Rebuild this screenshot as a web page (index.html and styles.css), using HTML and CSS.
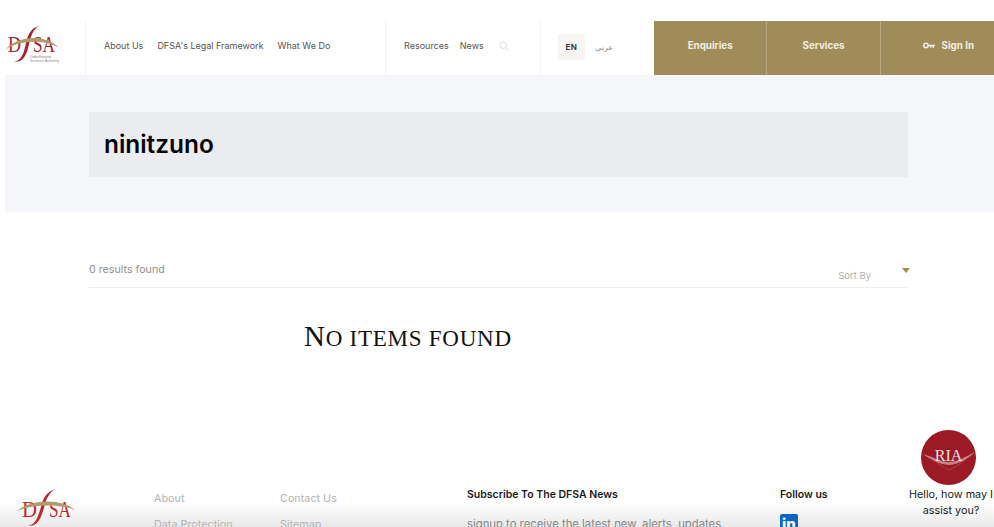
FILE: index.html
```html
<!DOCTYPE html>
<html>
  <head>
    <title>
      DFSA Search
    </title>
    <link rel="stylesheet" href="styles.css">
  </head>
  <body>
  <!-- navbar -->
    <nav class="nav_bar">
      <div class="logo_cell">
        <svg class="logo" width="58" height="40" viewBox="0 0 58 40">
          <text x="4" y="27" class="logo_caps" font-size="24" textLength="13" lengthAdjust="spacingAndGlyphs">D</text>
          <text x="29" y="27" class="logo_caps" font-size="24" textLength="22" lengthAdjust="spacingAndGlyphs">SA</text>
          <path d="M10 36 C17 37 20 28 22 18 C24 8 28 3 35 1 C29 5 27 10 25 19 C23 29 19 39 10 36Z" fill="#a5232f"/>
          <path d="M1 25 C14 10 42 9 55 23 C41 14 15 15 1 25Z" fill="#b39a6b"/>
          <text x="26" y="32.5" class="logo_small" font-size="3.6" textLength="21">Dubai Financial</text>
          <text x="26" y="36.5" class="logo_small" font-size="3.6" textLength="29">Services Authority</text>
        </svg>
      </div>
      <div class="nav_main">
        <a>About Us</a>
        <a>DFSA's Legal Framework</a>
        <a>What We Do</a>
      </div>
      <div class="nav_second">
        <a>Resources</a>
        <a>News</a>
        <svg class="search_icon" width="10" height="10" viewBox="0 0 11 11">
          <circle cx="4.6" cy="4.6" r="3.6" fill="none" stroke="#d8d8d8" stroke-width="1"/>
          <path d="M7.3 7.3 L10.4 10.4" stroke="#d8d8d8" stroke-width="1"/>
        </svg>
      </div>
      <div class="lang">
        <div class="lang_en">EN</div>
        <div class="lang_ar">عربي</div>
      </div>
      <div class="gold_links">
        <div class="gold_item">Enquiries</div>
        <div class="gold_item">Services</div>
        <div class="gold_item sign_in">
          <svg width="12" height="7" viewBox="0 0 12 7">
            <circle cx="3" cy="3.5" r="2.2" fill="none" stroke="#f3eee0" stroke-width="1.5"/>
            <path d="M5 2.8 H12 V4.2 H10.8 V6 H9.4 V4.2 H8.4 V5.4 H7 V4.2 H5Z" fill="#f3eee0"/>
          </svg>
          Sign In
        </div>
      </div>
    </nav>
<!-- search term -->
    <section class="hero">
      <div class="hero_box">ninitzuno</div>
    </section>
<!-- results -->
    <main class="results">
      <div class="results_bar">
        <div class="results_count">0 results found</div>
        <div class="sort_by">Sort By</div>
        <div class="sort_arrow"></div>
      </div>
      <h2 class="no_items">No items found</h2>
    </main>
<!-- footer -->
    <footer class="footer-section">
      <svg class="footer_logo" width="58" height="38" viewBox="0 0 58 38">
        <text x="5" y="28" class="footer_caps" font-size="24" textLength="15" lengthAdjust="spacingAndGlyphs">D</text>
        <text x="32" y="28" class="footer_caps" font-size="24" textLength="22" lengthAdjust="spacingAndGlyphs">SA</text>
        <path d="M11 36 C18 37 21 28 24 18 C26 8 30 3 38 0 C32 4 29 10 27 19 C24 29 20 39 11 36Z" fill="#c0272d"/>
        <path d="M0 22 C14 10 44 9 58 21 C43 15 16 15 0 22Z" fill="#b39a6b"/>
      </svg>
      <div class="footer_col col_one">
        <a>About</a>
        <a>Data Protection</a>
      </div>
      <div class="footer_col col_two">
        <a>Contact Us</a>
        <a>Sitemap</a>
      </div>
      <div class="subscribe">
        <h4>Subscribe To The DFSA News</h4>
        <p>signup to receive the latest new, alerts, updates</p>
      </div>
      <div class="follow">
        <h4>Follow us</h4>
        <div class="linkedin">in</div>
      </div>
    </footer>
<!-- chat bubble -->
    <div class="ria">
      <div class="ria_circle">
        <svg class="ria_wings" width="55" height="22" viewBox="0 0 55 22">
          <path d="M2 5 C12 8 20 13 28 13 C36 13 44 8 54 3 C46 11 38 15 28 16 C18 15 10 11 2 5Z" fill="#c9808a"/>
          <path d="M14 12 C20 17 24 19 28 21 C32 19 38 16 44 11" fill="none" stroke="#b5434f" stroke-width="1"/>
        </svg>
        <span class="ria_name">RIA</span>
      </div>
      <div class="ria_text">Hello, how may I<br>assist you?</div>
    </div>
    <div class="bottom_fade"></div>
  </body>
</html>
```

FILE: styles.css
```css
html, body{
  margin: 0;
  padding: 0;
  height: 527px;
  overflow: hidden;
  background-color: white;
  font-family: Inter, "Noto Sans", sans-serif;
}
/* navbar */
.nav_bar{
  display: flex;
  flex-direction: row;
  height: 54px;
  margin-top: 21px;
  font-size: 9px;
  color: rgb(85, 85, 85);
}
.logo_cell{
  width: 86px;
  border-right: 1px solid rgb(243, 243, 243);
  padding: 4px 0 0 4px;
  box-sizing: border-box;
}
.logo{
  display: block;
  overflow: visible;
}
.logo_caps{
  font-family: "Liberation Serif", serif;
  fill: #a5232f;
}
.footer_caps{
  font-family: "Liberation Serif", serif;
  fill: #c0272d;
}
.logo_small{
  font-family: "Liberation Sans", sans-serif;
  fill: #8a8a8a;
}
.nav_main{
  display: flex;
  align-items: center;
  gap: 14px;
  width: 300px;
  padding-left: 18px;
  padding-bottom: 5px;
  box-sizing: border-box;
  border-right: 1px solid rgb(243, 243, 243);
}
.nav_second{
  display: flex;
  align-items: center;
  gap: 11px;
  width: 155px;
  padding-left: 18px;
  padding-bottom: 5px;
  box-sizing: border-box;
  border-right: 1px solid rgb(243, 243, 243);
}
.search_icon{
  margin-left: 4px;
}
.lang{
  display: flex;
  align-items: center;
  gap: 10px;
  width: 113px;
  padding-left: 17px;
  padding-bottom: 3px;
  box-sizing: border-box;
}
.lang_en{
  width: 27px;
  height: 26px;
  background-color: rgb(246, 245, 242);
  color: rgb(60, 60, 60);
  font-size: 8px;
  font-weight: 700;
  letter-spacing: 0.6px;
  display: flex;
  align-items: center;
  justify-content: center;
}
.lang_ar{
  font-family: "DejaVu Sans", sans-serif;
  font-size: 8px;
  color: rgb(140, 140, 140);
  margin-top: 2px;
}
.gold_links{
  flex: 1;
  display: grid;
  grid-template-columns: repeat(3, 1fr);
  background-color: rgb(160, 140, 88);
  color: rgb(243, 238, 224);
  font-size: 9.8px;
  font-weight: 700;
}
.gold_item{
  display: flex;
  align-items: center;
  justify-content: center;
  border-right: 1px solid rgb(184, 168, 128);
  padding-bottom: 5px;
}
.sign_in{
  border-right: none;
  justify-content: flex-end;
  padding-right: 20px;
  gap: 6px;
}
/* search term */
.hero{
  margin-left: 5px;
  padding: 37px 86px 35px 84px;
  background-color: rgb(244, 246, 250);
}
.hero_box{
  height: 65px;
  line-height: 64px;
  padding-left: 15px;
  background-color: rgb(235, 236, 240);
  font-size: 24.4px;
  font-weight: 600;
  color: rgb(5, 5, 5);
}
/* results */
.results{
  padding: 0 86px 0 89px;
}
.results_bar{
  display: flex;
  align-items: center;
  height: 76px;
  box-sizing: border-box;
  padding-top: 48px;
  padding-bottom: 9px;
  border-bottom: 1px solid rgb(238, 238, 238);
  position: relative;
  color: rgb(145, 145, 145);
  font-size: 10.7px;
}
.results_count{
  flex: 1;
}
.sort_by{
  font-size: 9.5px;
  color: rgb(175, 175, 175);
  margin-right: 37px;
  padding-top: 13px;
}
.sort_arrow{
  position: absolute;
  right: -2px;
  top: 56px;
  border-left: 4px solid transparent;
  border-right: 4px solid transparent;
  border-top: 5px solid rgb(160, 140, 88);
}
.no_items{
  margin: 32px 0 0 215px;
  font-family: "Liberation Serif", serif;
  font-size: 23px;
  font-weight: normal;
  text-transform: uppercase;
  letter-spacing: 0.75px;
  line-height: 32px;
  color: rgb(17, 17, 17);
}
.no_items::first-letter{
  font-size: 29px;
}
/* footer */
.footer-section{
  position: relative;
  z-index: 1;
  display: flex;
  height: 36px;
  margin-top: 137px;
  padding-left: 17px;
  font-size: 10.8px;
  color: rgb(180, 180, 180);
}
.footer_logo{
  flex: none;
  margin-top: -3px;
  overflow: visible;
}
.footer_col{
  display: flex;
  flex-direction: column;
  gap: 13px;
  line-height: 13px;
}
.col_one{
  margin-left: 79px;
  width: 126px;
}
.col_two{
  width: 187px;
}
.subscribe{
  width: 313px;
  margin-top: -4px;
}
.follow{
  margin-top: -4px;
}
.subscribe h4,
.follow h4{
  margin: 0;
  font-size: 10.5px;
  line-height: 13px;
  font-weight: 600;
  color: rgb(26, 26, 26);
}
.subscribe p{
  margin: 17px 0 0 0;
  font-size: 11.3px;
  line-height: 13px;
  color: rgb(136, 136, 136);
}
.linkedin{
  width: 18px;
  height: 18px;
  margin-top: 13px;
  background-color: rgb(10, 102, 194);
  border-radius: 2px;
  color: white;
  font-size: 15px;
  font-weight: 800;
  line-height: 21px;
  text-align: center;
}
/* chat bubble */
.ria{
  position: absolute;
  z-index: 2;
  left: 902px;
  top: 430px;
  width: 92px;
  text-align: center;
  font-size: 10.8px;
  line-height: 16px;
  color: rgb(26, 26, 26);
}
.ria_circle{
  position: relative;
  width: 55px;
  height: 55px;
  margin-left: 19px;
  border-radius: 50%;
  background-color: rgb(155, 26, 38);
  overflow: hidden;
}
.ria_wings{
  position: absolute;
  left: 0;
  top: 19px;
}
.ria_name{
  position: absolute;
  left: 0;
  right: 0;
  top: 16px;
  font-family: "Liberation Serif", serif;
  font-size: 16px;
  line-height: 20px;
  color: rgb(245, 225, 228);
}
.ria_text{
  width: 90px;
  margin: 2px 0 0 4px;
}
.bottom_fade{
  position: absolute;
  left: 0;
  right: 0;
  top: 503px;
  height: 24px;
  background: linear-gradient(rgba(225, 225, 225, 0), rgba(225, 225, 225, 0.75));
}
```
